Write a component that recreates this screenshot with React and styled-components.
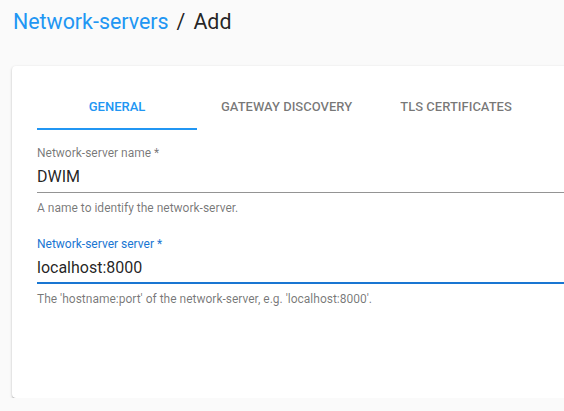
import React from "react";
import styled, { createGlobalStyle } from "styled-components";

const GlobalStyle = createGlobalStyle`
  html, body {
    margin: 0;
    padding: 0;
    background: #fafafa;
    font-family: Roboto, "Liberation Sans", Arial, sans-serif;
    overflow: hidden;
  }
`;

const Page = styled.div`
  padding: 10px 0 0 12px;
  width: 620px;
`;

const Title = styled.h1`
  margin: 0 0 32px 1px;
  font-size: 21.4px;
  font-weight: 400;
  line-height: 24px;
  color: rgba(0, 0, 0, 0.87);
`;

const Crumb = styled.a`
  color: #2196f3;
  text-decoration: none;
`;

const Slash = styled.span`
  margin: 0 8px;
`;

const Card = styled.div`
  background: #fff;
  border-radius: 4px;
  box-shadow: 0 1px 3px 0 rgba(0, 0, 0, 0.2), 0 1px 1px 0 rgba(0, 0, 0, 0.14),
    0 2px 1px -1px rgba(0, 0, 0, 0.12);
  padding: 16px 24px 92px 25px;
`;

const TabBar = styled.div`
  display: flex;
  margin-bottom: 16px;
`;

const Tab = styled.button`
  min-width: 160px;
  height: 48px;
  padding: 6px 24px;
  border: none;
  background: none;
  font-family: inherit;
  font-size: 13px;
  font-weight: 500;
  text-transform: uppercase;
  color: ${(p) => (p.$active ? "#2196f3" : "rgba(0, 0, 0, 0.54)")};
  box-shadow: ${(p) => (p.$active ? "inset 0 -2px 0 #2196f3" : "none")};
  cursor: pointer;
`;

const Field = styled.div`
  display: flex;
  flex-direction: column;
  & + & {
    margin-top: 22px;
  }
`;

const Label = styled.label`
  font-size: 12px;
  line-height: 14px;
  margin-bottom: 1px;
  color: ${(p) => (p.$focused ? "#1976d2" : "rgba(0, 0, 0, 0.54)")};
`;

const Input = styled.input`
  box-sizing: border-box;
  width: 100%;
  height: 32px;
  padding: 6px 0 7px;
  border: none;
  outline: none;
  background: none;
  font-family: inherit;
  font-size: 16px;
  line-height: 19px;
  color: rgba(0, 0, 0, 0.87);
  box-shadow: ${(p) =>
    p.$focused ? "inset 0 -2px 0 #1976d2" : "inset 0 -1px 0 rgba(0, 0, 0, 0.42)"};
`;

const Helper = styled.p`
  margin: 8px 0 0;
  font-size: 12px;
  line-height: 14px;
  color: rgba(0, 0, 0, 0.54);
`;

const tabs = ["General", "Gateway discovery", "TLS certificates"];

const fields = [
  {
    label: "Network-server name *",
    value: "DWIM",
    help: "A name to identify the network-server.",
  },
  {
    label: "Network-server server *",
    value: "localhost:8000",
    help: "The 'hostname:port' of the network-server, e.g. 'localhost:8000'.",
    focused: true,
  },
];

export default function App() {
  return (
    <>
      <GlobalStyle />
      <Page>
        <Title>
          <Crumb href="#">Network-servers</Crumb>
          <Slash>/</Slash>
          Add
        </Title>
        <Card>
          <TabBar>
            {tabs.map((t, i) => (
              <Tab key={t} $active={i === 0}>
                {t}
              </Tab>
            ))}
          </TabBar>
          {fields.map((f) => (
            <Field key={f.label}>
              <Label $focused={f.focused}>{f.label}</Label>
              <Input $focused={f.focused} defaultValue={f.value} readOnly />
              <Helper>{f.help}</Helper>
            </Field>
          ))}
        </Card>
      </Page>
    </>
  );
}
